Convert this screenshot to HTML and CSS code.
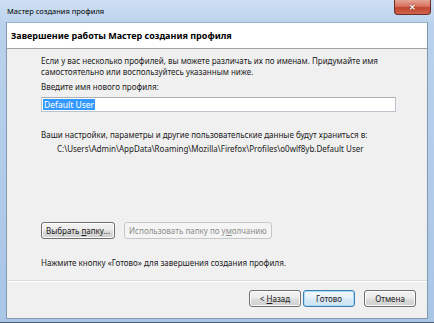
FILE: index.html
```html
<!DOCTYPE html>
<html lang="ru">
<head>
    <meta charset="UTF-8">
    <title>Мастер создания профиля</title>
    <link rel="stylesheet" href="styles.css">
</head>
<body>
    <div class="window">
        <!-- Title bar -->
        <div class="titlebar">
            <span class="title">Мастер создания профиля</span>
            <button class="close">&#x2715;</button>
        </div>

        <div class="client">
            <!-- Wizard header -->
            <div class="header">Завершение работы Мастер создания профиля</div>

            <!-- Wizard page -->
            <div class="content">
                <p class="intro">Если у вас несколько профилей, вы можете различать их по именам. Придумайте имя самостоятельно или воспользуйтесь указанным ниже.</p>
                <p class="label">Введите имя нового профиля:</p>
                <div class="textbox"><span class="selected">Default User</span></div>
                <p class="storage">Ваши настройки, параметры и другие пользовательские данные будут храниться в:</p>
                <p class="path">C:\Users\Admin\AppData\Roaming\Mozilla\Firefox\Profiles\o0wlf8yb.Default User</p>
                <div class="folder-buttons">
                    <button class="btn">Выбрать <u>п</u>апку...</button>
                    <button class="btn" disabled>Использовать папку по у<u>м</u>олчанию</button>
                </div>
                <p class="finish">Нажмите кнопку «Готово» для завершения создания профиля.</p>
            </div>

            <!-- Navigation -->
            <div class="footer">
                <button class="btn nav">&lt; <u>Н</u>азад</button>
                <button class="btn nav default">Готово</button>
                <button class="btn nav cancel">Отмена</button>
            </div>
        </div>
    </div>
</body>
</html>
```

FILE: styles.css
```css
* {
    margin: 0;
    padding: 0;
    box-sizing: border-box;
    font-family: "Noto Sans", sans-serif;
}

body {
    background-color: #9fbbdc;
    width: 434px;
    height: 323px;
    overflow: hidden;
}

.window {
    height: 323px;
    display: flex;
    flex-direction: column;
    padding: 0 6px 3px 6px;
    background: linear-gradient(180deg, #cfe0f3 0%, #b9d1ec 8%, #a9c6e7 100%);
    border-bottom: 1px solid #4b5b6e;
}

.titlebar {
    height: 22px;
    display: flex;
    align-items: flex-start;
    flex-shrink: 0;
}

.title {
    font-size: 7.5px;
    color: #000000;
    margin-top: 6px;
    margin-left: 1px;
}

.close {
    margin-left: auto;
    margin-right: -3px;
    width: 37px;
    height: 15px;
    border: 1px solid #6d2e25;
    border-top: 0;
    border-radius: 0 0 4px 4px;
    background: linear-gradient(180deg, #e6a493 0%, #d7725e 45%, #c0452f 55%, #d0654c 100%);
    color: #ffffff;
    font-size: 8px;
    font-weight: bold;
    line-height: 14px;
    text-shadow: 0 0 2px #5a1a10;
}

.client {
    flex: 1;
    display: flex;
    flex-direction: column;
    background-color: #f0f0f0;
    border: 1px solid #8397af;
    border-top-color: #9db3cc;
}

.header {
    height: 26px;
    background-color: #ffffff;
    border-bottom: 1px solid #a0a0a0;
    font-size: 9px;
    font-weight: bold;
    color: #000000;
    padding: 6px 0 0 4px;
    flex-shrink: 0;
}

.content {
    flex: 1;
    padding: 6px 0 0 34px;
    font-size: 8px;
    color: #1a1a1a;
    line-height: 11px;
}

.intro {
    width: 345px;
}

.label {
    margin-top: 4px;
}

.textbox {
    width: 355px;
    height: 15px;
    margin-top: 5px;
    background-color: #ffffff;
    border: 1px solid #bcc3cb;
    border-top-color: #abadb3;
    padding: 1px 1px;
    line-height: 11px;
    font-size: 8.5px;
}

.selected {
    background-color: #3399ff;
    color: #ffffff;
    padding: 0 1px;
}

.storage {
    margin-top: 17px;
}

.path {
    margin-top: 3px;
    padding-left: 16px;
}

.folder-buttons {
    display: flex;
    gap: 9px;
    margin-top: 68px;
}

.btn {
    height: 17px;
    padding: 0 4px;
    border: 1px solid #707070;
    border-radius: 3px;
    background: linear-gradient(180deg, #f3f3f3 0%, #ebebeb 48%, #dddddd 52%, #cfcfcf 100%);
    font-size: 8px;
    color: #1a1a1a;
    box-shadow: inset 0 0 0 1px #fbfbfb;
}

.btn:disabled {
    border-color: #c5c7c9;
    background: #f4f4f4;
    color: #8d8d8d;
    box-shadow: none;
}

.finish {
    margin-top: 18px;
}

.footer {
    height: 38px;
    flex-shrink: 0;
    border-top: 1px solid #dcdcdc;
    box-shadow: inset 0 1px 0 #ffffff;
    display: flex;
    justify-content: flex-end;
    align-items: flex-start;
    padding: 9px 11px 0 0;
    gap: 2px;
}

.nav {
    width: 52px;
}

.default {
    border-color: #3c7fb1;
    box-shadow: inset 0 0 0 1px #a9dcf6;
    background: linear-gradient(180deg, #f2f8fc 0%, #e6f1f9 48%, #d8e9f5 52%, #cfe3f2 100%);
}

.cancel {
    margin-left: 7px;
}
```
